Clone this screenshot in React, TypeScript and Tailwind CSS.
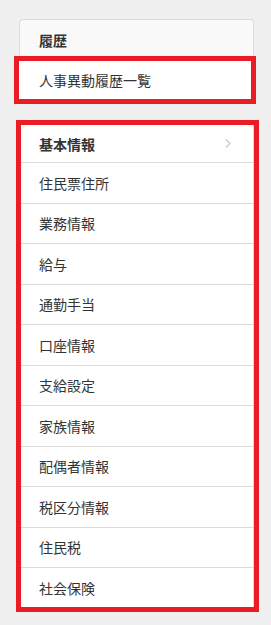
// Sidebar menu: history card + basic info list, each highlighted with a red box

const items = [
  '住民票住所',
  '業務情報',
  '給与',
  '通勤手当',
  '口座情報',
  '支給設定',
  '家族情報',
  '配偶者情報',
  '税区分情報',
  '住民税',
]

function Chevron() {
  return (
    <svg width="6" height="9" viewBox="0 0 6 9" className="mr-[22px]">
      <polyline points="1,0.5 5,4.5 1,8.5" fill="none" stroke="#c8c8c8" strokeWidth="1.2" />
    </svg>
  )
}

export default function App() {
  return (
    <div
      className="w-[271px] h-[625px] bg-[#f0f0f0] pt-[19px] text-[14px] text-[#333]"
      style={{ fontFamily: '"Noto Sans CJK JP", "Noto Sans", sans-serif' }}
    >
      <div className="ml-[19px] w-[235px] h-[37px] bg-[#f9f9f9] border border-b-0 border-[#dcdcdc] rounded-t-[4px] pl-[19px] pt-[10px] leading-[20px] font-bold">
        履歴
      </div>
      <div className="ml-[14px] w-[242px] h-[48px] border-[5px] border-[#ec1c24] bg-white flex items-center pl-[20px] leading-[20px]">
        人事異動履歴一覧
      </div>

      <div className="mt-[16px] ml-[16px] w-[243px] h-[492px] border-[5px] border-[#ec1c24]">
        <div className="h-full bg-white border-r border-[#dcdcdc] flex flex-col">
          <div className="h-[38px] shrink-0 border-b border-[#dcdcdc] flex items-center justify-between pl-[18px] font-bold leading-[20px]">
            <span>基本情報</span>
            <Chevron />
          </div>
          {items.map((label) => (
            <div
              key={label}
              className="h-[40.5px] shrink-0 border-b border-[#dcdcdc] flex items-center pl-[18px] leading-[20px]"
            >
              {label}
            </div>
          ))}
          <div className="flex-1 flex items-center pl-[18px] leading-[20px]">社会保険</div>
        </div>
      </div>
    </div>
  )
}
